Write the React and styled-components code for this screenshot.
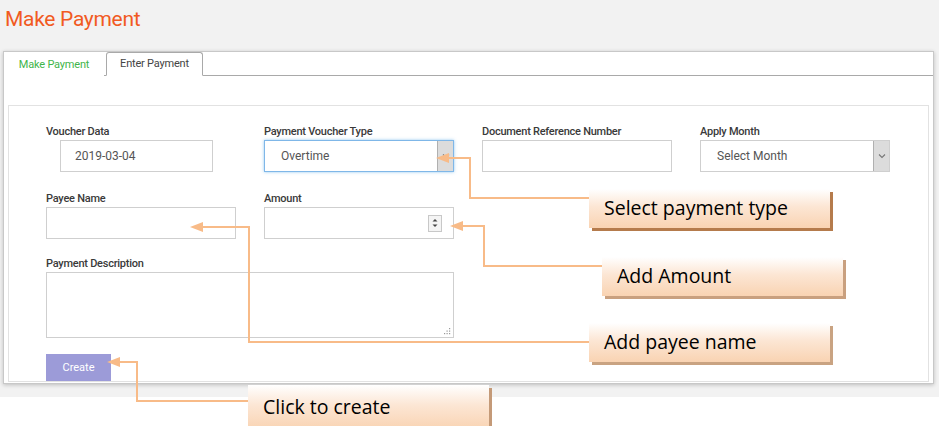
import React from 'react'
import styled, { createGlobalStyle } from 'styled-components'

const GlobalStyle = createGlobalStyle`
	body {
		margin: 0;
		background: #fff;
		font-family: Roboto, 'Liberation Sans', sans-serif;
	}
`

const arrows = [
	{ points: '589,198 470,198 470,158 446,158', tip: [436, 158] },
	{ points: '602,266 484,266 484,226 460,226', tip: [450, 226] },
	{ points: '589,342 249,342 249,227 200,227', tip: [190, 227] },
	{ points: '248,401 137,401 137,362 117,362', tip: [107, 362] },
]

const callouts = [
	{ text: 'Select payment type', x: 589, y: 189, shadow: '#b57b4c' },
	{ text: 'Add Amount', x: 602, y: 257, shadow: '#c9a07f' },
	{ text: 'Add payee name', x: 589, y: 323, shadow: '#c9a382' },
	{ text: 'Click to create', x: 248, y: 385, shadow: '#c49a78', tall: true },
]

const Chevron = () => (
	<svg width="8" height="6" viewBox="0 0 8 6">
		<path d="M1 1.5 L4 4.5 L7 1.5" fill="none" stroke="#777" strokeWidth="1.1" />
	</svg>
)

const App = () => {
	return (
		<Root>
			<GlobalStyle />
			<Page>
				<Title>Make Payment</Title>
				<Card>
					<TabBar>
						<Tab $green>Make Payment</Tab>
						<Tab $active>Enter Payment</Tab>
					</TabBar>
					<Panel>
						<FormGrid>
							<Field>
								<Label>Voucher Data</Label>
								<TextBox $indent>2019-03-04</TextBox>
							</Field>
							<Field>
								<Label>Payment Voucher Type</Label>
								<SelectBox $focused>
									<SelectValue>Overtime</SelectValue>
									<ArrowBox>
										<Chevron />
									</ArrowBox>
								</SelectBox>
							</Field>
							<Field>
								<Label>Document Reference Number</Label>
								<TextBox />
							</Field>
							<Field>
								<Label>Apply Month</Label>
								<SelectBox>
									<SelectValue>Select Month</SelectValue>
									<ArrowBox>
										<Chevron />
									</ArrowBox>
								</SelectBox>
							</Field>
							<Field>
								<Label>Payee Name</Label>
								<TextBox />
							</Field>
							<Field>
								<Label>Amount</Label>
								<NumberBox>
									<Spinner>
										<svg width="8" height="12" viewBox="0 0 8 12">
											<path d="M1.5 4.5 L4 2 L6.5 4.5 Z" fill="#444" />
											<path d="M1.5 7.5 L4 10 L6.5 7.5 Z" fill="#444" />
										</svg>
									</Spinner>
								</NumberBox>
							</Field>
							<Field $row={3} $span={2}>
								<Label>Payment Description</Label>
								<AreaBox>
									<svg width="8" height="8" viewBox="0 0 8 8">
										<rect x="6" y="1" width="1.2" height="1.2" fill="#999" />
										<rect x="3.5" y="3.5" width="1.2" height="1.2" fill="#999" />
										<rect x="6" y="3.5" width="1.2" height="1.2" fill="#999" />
										<rect x="1" y="6" width="1.2" height="1.2" fill="#999" />
										<rect x="3.5" y="6" width="1.2" height="1.2" fill="#999" />
										<rect x="6" y="6" width="1.2" height="1.2" fill="#999" />
									</svg>
								</AreaBox>
							</Field>
						</FormGrid>
						<CreateButton>Create</CreateButton>
					</Panel>
				</Card>
			</Page>

			<Overlay>
				<svg width="939" height="426" viewBox="0 0 939 426">
					{arrows.map((a, i) => (
						<g key={i}>
							<polyline points={a.points} fill="none" stroke="#f8bb88" strokeWidth="2" />
							<polygon
								points={`${a.tip[0]},${a.tip[1]} ${a.tip[0] + 13},${a.tip[1] - 5} ${a.tip[0] + 13},${a.tip[1] + 5}`}
								fill="#f8bb88"
							/>
						</g>
					))}
				</svg>
				{callouts.map((c) => (
					<Callout key={c.text} style={{ left: c.x, top: c.y }} $shadow={c.shadow} $tall={c.tall}>
						{c.text}
					</Callout>
				))}
			</Overlay>
		</Root>
	)
}

export default App

const Root = styled.div`
	position: relative;
	width: 939px;
	height: 426px;
	overflow: hidden;
`

const Page = styled.div`
	background: #f2f2f2;
	padding: 6px 0 13px;
`

const Title = styled.h1`
	margin: 0 0 19px 5px;
	font-size: 21px;
	line-height: 26px;
	font-weight: 400;
	color: #f15a22;
	letter-spacing: -0.3px;
`

const Card = styled.div`
	margin: 0 5px 0 3px;
	background: #fff;
	border: 1px solid #c8c8c8;
	box-shadow: 0 1px 4px rgba(0, 0, 0, 0.22);
	padding-bottom: 1px;
`

const TabBar = styled.div`
	display: flex;
	align-items: flex-end;
	box-sizing: border-box;
	height: 24px;
	border-bottom: 1px solid #a9a9a9;
	gap: 2px;
`

const Tab = styled.div`
	box-sizing: border-box;
	width: ${(p) => (p.$active ? '97px' : '100px')};
	text-align: center;
	height: ${(p) => (p.$active ? '24px' : '23px')};
	line-height: 22px;
	font-size: 11px;
	letter-spacing: -0.2px;
	color: ${(p) => (p.$green ? '#3fb54a' : '#444')};
	background: #fff;
	border: 1px solid ${(p) => (p.$active ? '#a9a9a9' : 'transparent')};
	border-bottom-color: ${(p) => (p.$active ? '#fff' : 'transparent')};
	border-radius: 3px 3px 0 0;
	margin-bottom: -1px;
`

const Panel = styled.div`
	margin: 29px 4px 0 4px;
	border: 1px solid #e2e2e2;
	padding: 19px 0 0 37px;
`

const FormGrid = styled.div`
	display: grid;
	grid-template-columns: repeat(4, 190px);
	column-gap: 28px;
	row-gap: 20px;
`

const Field = styled.div`
	display: flex;
	flex-direction: column;
	grid-column: ${(p) => (p.$row ? `1 / span ${p.$span}` : 'auto')};
	grid-row: ${(p) => p.$row || 'auto'};
	margin-top: ${(p) => (p.$row ? '-2px' : '0')};
`

const Label = styled.label`
	font-size: 11px;
	line-height: 13px;
	font-weight: 500;
	letter-spacing: -0.25px;
	color: #3a3a3a;
	margin-bottom: 2px;
	white-space: nowrap;
`

const TextBox = styled.div`
	box-sizing: border-box;
	height: 32px;
	line-height: 30px;
	margin-left: ${(p) => (p.$indent ? '14px' : '0')};
	width: ${(p) => (p.$indent ? '153px' : '100%')};
	padding: 0 14px;
	border: 1px solid #cfcfcf;
	font-size: 12px;
	color: #555;
	background: #fff;
`

const SelectBox = styled.div`
	box-sizing: border-box;
	height: 32px;
	display: flex;
	border: 1px solid ${(p) => (p.$focused ? '#7fb7e8' : '#cfcfcf')};
	box-shadow: ${(p) => (p.$focused ? '0 0 3px rgba(102, 175, 233, 0.7)' : 'none')};
	background: #fff;
`

const SelectValue = styled.div`
	flex: 1;
	line-height: 30px;
	padding-left: 16px;
	font-size: 12px;
	color: #555;
`

const ArrowBox = styled.div`
	width: 15px;
	display: flex;
	align-items: center;
	justify-content: center;
	background: #dcdcdc;
	border-left: 1px solid #b0b0b0;
`

const NumberBox = styled.div`
	box-sizing: border-box;
	height: 32px;
	display: flex;
	align-items: center;
	justify-content: flex-end;
	padding-right: 11px;
	border: 1px solid #cfcfcf;
	background: #fff;
`

const Spinner = styled.div`
	box-sizing: border-box;
	width: 14px;
	height: 17px;
	display: flex;
	align-items: center;
	justify-content: center;
	border: 1px solid #c8c8c8;
	background: #f4f4f4;
`

const AreaBox = styled.div`
	box-sizing: border-box;
	height: 66px;
	display: flex;
	align-items: flex-end;
	justify-content: flex-end;
	padding: 0 2px 2px 0;
	border: 1px solid #cfcfcf;
	background: #fff;
`

const CreateButton = styled.button`
	display: block;
	margin-top: 16px;
	width: 65px;
	height: 27px;
	border: none;
	background: #9c9bd8;
	color: #fff;
	font-family: Roboto, 'Liberation Sans', sans-serif;
	font-size: 11px;
	padding: 0;
`

const Overlay = styled.div`
	position: absolute;
	inset: 0;
	pointer-events: none;

	svg {
		display: block;
	}
`

const Callout = styled.div`
	position: absolute;
	box-sizing: border-box;
	width: 241px;
	height: ${(p) => (p.$tall ? '45px' : '39px')};
	padding-left: 15px;
	line-height: ${(p) => (p.$tall ? '43px' : '37px')};
	font-family: 'Open Sans', 'Noto Sans', sans-serif;
	font-size: 19.5px;
	color: #000;
	background: linear-gradient(to bottom, #ffffff 0%, #fce6d4 45%, #f9d3b2 100%);
	box-shadow: 3px 3px 0 ${(p) => p.$shadow};
`
